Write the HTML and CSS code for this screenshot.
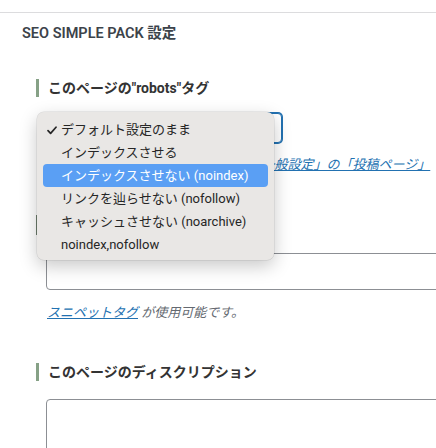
FILE: index.html
```html
<!DOCTYPE html>
<html lang="ja">
<head>
<meta charset="utf-8">
<title>SEO SIMPLE PACK 設定</title>
<link rel="stylesheet" href="styles.css">
</head>
<body>
<div class="topbar"></div>
<h1 class="page-title">SEO SIMPLE PACK 設定</h1>
<div class="section">
  <h2 class="field-head">このページの"robots"タグ</h2>
  <div class="select-wrap">
    <div class="select-box"></div>
    <div class="menu">
      <div class="menu-item"><svg class="check" width="10" height="9" viewBox="0 0 10 9"><polyline points="1,4.6 3.6,7.4 9,1.2" fill="none" stroke="#262626" stroke-width="1.7" stroke-linecap="round" stroke-linejoin="round"/></svg>デフォルト設定のまま</div>
      <div class="menu-item">インデックスさせる</div>
      <div class="menu-item active">インデックスさせない (noindex)</div>
      <div class="menu-item">リンクを辿らせない (nofollow)</div>
      <div class="menu-item">キャッシュさせない (noarchive)</div>
      <div class="menu-item">noindex,nofollow</div>
    </div>
  </div>
  <p class="desc">「デフォルト設定のまま」の場合、<a class="link" href="#">「一般設定」の「投稿ページ」</a></p>
  <div class="field-marker"></div>
  <div class="text-input"></div>
  <p class="desc snippet"><a class="link" href="#">スニペットタグ</a> が使用可能です。</p>
  <h2 class="field-head second">このページのディスクリプション</h2>
  <div class="textarea"></div>
</div>
</body>
</html>
```
FILE: styles.css
```css
html, body {
  margin: 0;
  padding: 0;
  overflow: hidden;
  background: #ffffff;
}
body {
  width: 436px;
  height: 448px;
  font-family: Roboto, "Noto Sans CJK JP", sans-serif;
  color: #333333;
}
.topbar {
  height: 12px;
  border-bottom: 1px solid #dcdcde;
}
.page-title {
  margin: 11px 0 0 22px;
  font-size: 14.5px;
  line-height: 20px;
  font-weight: 600;
  color: #3c434a;
}
.section {
  padding-left: 36px;
}
.field-head {
  margin: 35px 0 0 0;
  border-left: 3px solid #86a186;
  padding-left: 9px;
  font-size: 14px;
  line-height: 18px;
  font-weight: 700;
  color: #333333;
}
.select-wrap {
  position: relative;
  margin: 16px 0 0 11px;
  width: 235px;
  height: 30px;
}
.select-box {
  box-sizing: border-box;
  width: 235px;
  height: 30px;
  border: 1px solid #2271b1;
  box-shadow: 0 0 0 1px #2271b1;
  border-radius: 4px;
  background: #fff;
}
.menu {
  position: absolute;
  left: -10px;
  top: -1px;
  width: 237px;
  box-sizing: border-box;
  padding: 6px 0 4px;
  background: #e9e7e5;
  border-radius: 7px;
  box-shadow: 0 0 0 0.5px rgba(0, 0, 0, 0.12), 0 6px 18px rgba(0, 0, 0, 0.22);
  z-index: 5;
}
.menu-item {
  position: relative;
  height: 23px;
  line-height: 23px;
  margin: 0 6px;
  padding-left: 18px;
  border-radius: 4px;
  font-size: 13px;
  color: #262626;
  white-space: nowrap;
}
.menu-item.active {
  background: #5a9ff4;
  color: #ffffff;
}
.check {
  position: absolute;
  left: 4px;
  top: 8px;
}
.desc {
  margin: 12px 0 0 11px;
  width: 384px;
  font-size: 13px;
  line-height: 20px;
  font-style: italic;
  color: #646970;
}
.link {
  color: #2271b1;
  text-decoration: underline;
}
.field-marker {
  margin-top: 40px;
  width: 3px;
  height: 20px;
  background: #6f7f6f;
}
.text-input {
  box-sizing: border-box;
  margin: 18px 0 0 10px;
  width: 600px;
  height: 37px;
  border: 1px solid #8c8f94;
  border-radius: 4px;
}
.snippet {
  margin-top: 13px;
  width: auto;
}
.second {
  margin-top: 40px;
}
.textarea {
  box-sizing: border-box;
  margin: 18px 0 0 10px;
  width: 600px;
  height: 120px;
  border: 1px solid #8c8f94;
  border-radius: 4px;
}
```
